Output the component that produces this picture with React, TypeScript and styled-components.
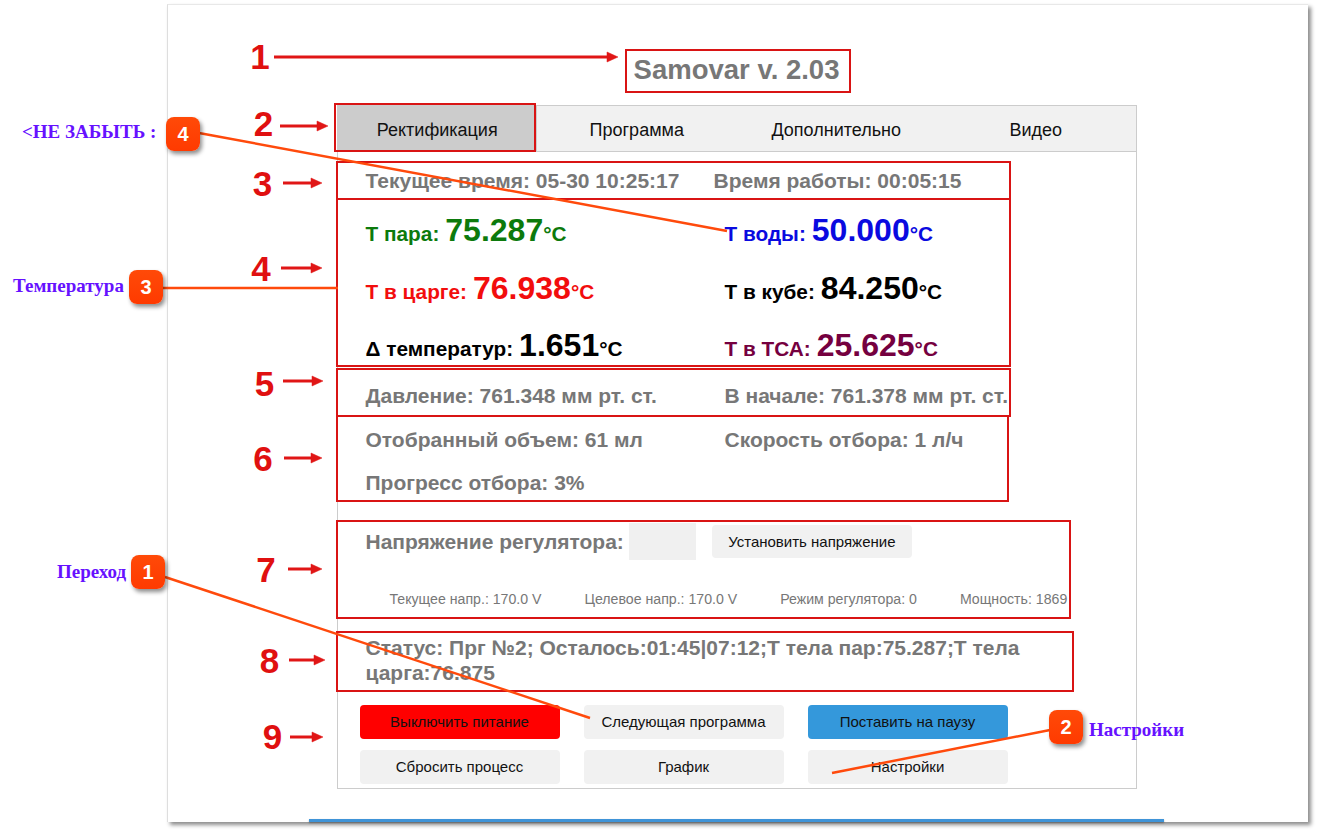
import React from "react";
import styled, { createGlobalStyle } from "styled-components";

const Global = createGlobalStyle`
  html, body { margin: 0; padding: 0; background: #ffffff; }
  body { font-family: "Liberation Sans", Arial, sans-serif; }
  * { box-sizing: border-box; }
`;

const Stage = styled.div`
  position: relative;
  width: 1317px;
  height: 832px;
  overflow: hidden;
  padding-top: 4px;
  background: #ffffff;
`;

const Sheet = styled.div`
  margin-left: 167px;
  width: 1141px;
  height: 818px;
  background: #ffffff;
  border-left: 1px solid #dedede;
  border-top: 1px solid #e8e8e8;
  box-shadow: 3px 3px 4px rgba(0, 0, 0, 0.45);
  display: flex;
  flex-direction: column;
  align-items: center;
  padding-right: 3px;
`;

const Title = styled.h1`
  margin: 49px 0 0 0;
  height: 32px;
  line-height: 32px;
  font-size: 27.5px;
  font-weight: bold;
  color: #777777;
`;

const Panel = styled.div`
  margin-top: 19px;
  width: 800px;
  height: 684px;
  border: 1px solid #cccccc;
  display: flex;
  flex-direction: column;
`;

const TabBar = styled.div`
  display: grid;
  grid-template-columns: repeat(4, 1fr);
  height: 46px;
  background: #f1f1f1;
  border-bottom: 1px solid #cccccc;
`;

const Tab = styled.div<{ $active?: boolean }>`
  display: flex;
  align-items: center;
  justify-content: center;
  padding-top: 3px;
  font-size: 18px;
  color: #111111;
  background: ${(p) => (p.$active ? "#cccccc" : "#f1f1f1")};
`;

const GrayText = styled.span`
  font-size: 21px;
  font-weight: bold;
  color: #777777;
  white-space: nowrap;
`;

const TimeRow = styled.div`
  margin-top: 10px;
  height: 37px;
  padding-left: 28px;
  display: grid;
  grid-template-columns: 348px auto;
  align-items: center;
`;

const TempGrid = styled.div`
  margin-top: 3px;
  padding-left: 28px;
  display: grid;
  grid-template-columns: 359px auto;
  grid-auto-rows: 57.5px;
  align-items: center;
`;

const TempCell = styled.div<{ $color: string }>`
  display: flex;
  align-items: baseline;
  color: ${(p) => p.$color};
  font-weight: bold;
  white-space: nowrap;
`;

const TempLabel = styled.span`
  font-size: 20.8px;
  margin-right: 6px;
`;

const TempValue = styled.span`
  font-size: 32px;
`;

const TempUnit = styled.span`
  font-size: 20.8px;
`;

const InfoGrid = styled.div`
  padding-left: 28px;
  display: grid;
  grid-template-columns: 359px auto;
  grid-auto-rows: 43.5px;
  align-items: center;
`;

const Regulator = styled.div`
  margin-top: 16px;
  padding-top: 2px;
  padding-left: 28px;
  display: flex;
  flex-direction: column;
`;

const RegTop = styled.div`
  display: flex;
  align-items: center;
  height: 37px;
`;

const VoltInput = styled.div`
  width: 67px;
  height: 37px;
  margin-left: 5px;
  background: #f0f0f0;
`;

const Button = styled.button<{ $tone?: "red" | "blue" | "gray" }>`
  width: 200px;
  height: 34px;
  border: none;
  border-radius: 4px;
  font-family: "Liberation Sans", Arial, sans-serif;
  font-size: 15px;
  color: #111111;
  padding: 0;
  background: ${(p) =>
    p.$tone === "red" ? "#ff0000" : p.$tone === "blue" ? "#3498db" : "#f1f1f1"};
`;

const SetButton = styled(Button)`
  height: 33px;
  margin-left: 16px;
`;

const RegStats = styled.div`
  margin-top: 31px;
  padding-left: 24px;
  display: flex;
  gap: 43px;
  font-size: 14.15px;
  line-height: 16px;
  color: #777777;
  white-space: nowrap;
`;

const Status = styled.div`
  margin-top: 28px;
  padding-left: 28px;
  width: 730px;
  font-size: 21px;
  line-height: 25px;
  font-weight: bold;
  color: #777777;
`;

const ButtonGrid = styled.div`
  margin-top: 19.5px;
  padding-left: 22px;
  display: grid;
  grid-template-columns: repeat(3, 200px);
  column-gap: 24px;
  row-gap: 11px;
`;

const FooterLine = styled.div`
  margin-top: 30px;
  width: 855px;
  height: 3px;
  background: #3f94d8;
  box-shadow: 0 1px 2px rgba(0, 0, 0, 0.35);
`;

/* ---------- annotation layer ---------- */

const Overlay = styled.div`
  position: absolute;
  inset: 0;
  pointer-events: none;
`;

const Drawing = styled.svg`
  position: absolute;
  left: 0;
  top: 0;
`;

const Num = styled.span<{ $x: number; $y: number }>`
  position: absolute;
  left: ${(p) => p.$x}px;
  top: ${(p) => p.$y}px;
  transform: translate(-50%, -50%);
  font-family: "Liberation Sans", Arial, sans-serif;
  font-weight: bold;
  font-size: 35px;
  line-height: 1;
  color: #e01010;
`;

const Badge = styled.span<{ $x: number; $y: number }>`
  position: absolute;
  left: ${(p) => p.$x - 17}px;
  top: ${(p) => p.$y - 17}px;
  width: 34px;
  height: 34px;
  border-radius: 8px;
  background: linear-gradient(#ff4a08, #ff3a00);
  box-shadow: 2px 3px 4px rgba(0, 0, 0, 0.45);
  display: flex;
  align-items: center;
  justify-content: center;
  color: #ffffff;
  font-family: "Liberation Sans", Arial, sans-serif;
  font-weight: bold;
  font-size: 20px;
`;

const Note = styled.span<{ $x: number; $y: number }>`
  position: absolute;
  left: ${(p) => p.$x}px;
  top: ${(p) => p.$y}px;
  transform: translateY(-50%);
  font-family: "Liberation Serif", "Times New Roman", serif;
  font-weight: bold;
  font-size: 19px;
  line-height: 1;
  color: #6611ff;
  white-space: nowrap;
`;

const arrows = [
  { n: "1", nx: 260, ny: 55.5, x1: 274, x2: 618, y: 57 },
  { n: "2", nx: 263.5, ny: 122.5, x1: 280, x2: 328, y: 126 },
  { n: "3", nx: 262.5, ny: 182.5, x1: 283, x2: 322, y: 183 },
  { n: "4", nx: 261, ny: 268, x1: 281, x2: 322, y: 268 },
  { n: "5", nx: 264.5, ny: 383, x1: 283, x2: 323, y: 381 },
  { n: "6", nx: 263, ny: 458, x1: 284, x2: 322, y: 458 },
  { n: "7", nx: 266, ny: 569, x1: 288, x2: 322, y: 569 },
  { n: "8", nx: 269.5, ny: 660, x1: 289, x2: 325, y: 660 },
  { n: "9", nx: 272.5, ny: 736, x1: 290, x2: 323, y: 737 },
];

const boxes = [
  [626, 50, 850, 92],
  [335, 104, 535, 151],
  [337, 162, 1010, 199],
  [337, 199, 1010, 366],
  [337, 369, 1010, 416],
  [337, 416, 1008, 501],
  [337, 521, 1070, 618],
  [337, 632, 1073, 691],
];

const leaders = [
  [199, 133, 727, 231],
  [163, 288, 338, 288],
  [165, 577, 590, 718],
  [1050, 730, 832, 773],
];

const badges = [
  { n: "4", x: 183, y: 134 },
  { n: "3", x: 146, y: 287 },
  { n: "1", x: 148, y: 572 },
  { n: "2", x: 1066, y: 727 },
];

const temps = [
  { label: "Т пара:", value: "75.287", color: "#0c7a0c" },
  { label: "Т воды:", value: "50.000", color: "#0a0ae0" },
  { label: "Т в царге:", value: "76.938", color: "#f20d0d" },
  { label: "Т в кубе:", value: "84.250", color: "#000000" },
  { label: "Δ температур:", value: "1.651", color: "#000000" },
  { label: "Т в ТСА:", value: "25.625", color: "#75003f" },
];

export default function App() {
  return (
    <Stage>
      <Global />
      <Sheet>
        <Title>Samovar v. 2.03</Title>
        <Panel>
          <TabBar>
            <Tab $active>Ректификация</Tab>
            <Tab>Программа</Tab>
            <Tab>Дополнительно</Tab>
            <Tab>Видео</Tab>
          </TabBar>
          <TimeRow>
            <GrayText>Текущее время: 05-30 10:25:17</GrayText>
            <GrayText>Время работы: 00:05:15</GrayText>
          </TimeRow>
          <TempGrid>
            {temps.map((t) => (
              <TempCell key={t.label} $color={t.color}>
                <TempLabel>{t.label}</TempLabel>
                <TempValue>{t.value}</TempValue>
                <TempUnit>°C</TempUnit>
              </TempCell>
            ))}
          </TempGrid>
          <InfoGrid>
            <GrayText>Давление: 761.348 мм рт. ст.</GrayText>
            <GrayText>В начале: 761.378 мм рт. ст.</GrayText>
            <GrayText>Отобранный объем: 61 мл</GrayText>
            <GrayText>Скорость отбора: 1 л/ч</GrayText>
            <GrayText>Прогресс отбора: 3%</GrayText>
          </InfoGrid>
          <Regulator>
            <RegTop>
              <GrayText>Напряжение регулятора:</GrayText>
              <VoltInput />
              <SetButton>Установить напряжение</SetButton>
            </RegTop>
            <RegStats>
              <span>Текущее напр.: 170.0 V</span>
              <span>Целевое напр.: 170.0 V</span>
              <span>Режим регулятора: 0</span>
              <span>Мощность: 1869</span>
            </RegStats>
          </Regulator>
          <Status>
            Статус: Прг №2; Осталось:01:45|07:12;Т тела пар:75.287;Т тела царга:76.875
          </Status>
          <ButtonGrid>
            <Button $tone="red">Выключить питание</Button>
            <Button>Следующая программа</Button>
            <Button $tone="blue">Поставить на паузу</Button>
            <Button>Сбросить процесс</Button>
            <Button>График</Button>
            <Button>Настройки</Button>
          </ButtonGrid>
        </Panel>
        <FooterLine />
      </Sheet>

      <Overlay>
        <Drawing width="1317" height="832" viewBox="0 0 1317 832">
          {boxes.map(([x1, y1, x2, y2], i) => (
            <rect
              key={i}
              x={x1}
              y={y1}
              width={x2 - x1}
              height={y2 - y1}
              fill="none"
              stroke="#d91414"
              strokeWidth="2"
            />
          ))}
          {arrows.map((a) => (
            <g key={a.n} fill="#e01616" stroke="#e01616">
              <line x1={a.x1} y1={a.y} x2={a.x2 - 9} y2={a.y} strokeWidth="3" />
              <polygon
                points={`${a.x2},${a.y} ${a.x2 - 11},${a.y - 5} ${a.x2 - 11},${a.y + 5}`}
                strokeWidth="0.5"
              />
            </g>
          ))}
          {leaders.map(([x1, y1, x2, y2], i) => (
            <line
              key={i}
              x1={x1}
              y1={y1}
              x2={x2}
              y2={y2}
              stroke="#ff4a0c"
              strokeWidth="2.5"
            />
          ))}
        </Drawing>
        {arrows.map((a) => (
          <Num key={a.n} $x={a.nx} $y={a.ny}>
            {a.n}
          </Num>
        ))}
        {badges.map((b) => (
          <Badge key={b.n} $x={b.x} $y={b.y}>
            {b.n}
          </Badge>
        ))}
        <Note $x={22} $y={131}>&lt;НЕ ЗАБЫТЬ :</Note>
        <Note $x={13} $y={285}>Температура</Note>
        <Note $x={57} $y={571}>Переход</Note>
        <Note $x={1089} $y={729}>Настройки</Note>
      </Overlay>
    </Stage>
  );
}
